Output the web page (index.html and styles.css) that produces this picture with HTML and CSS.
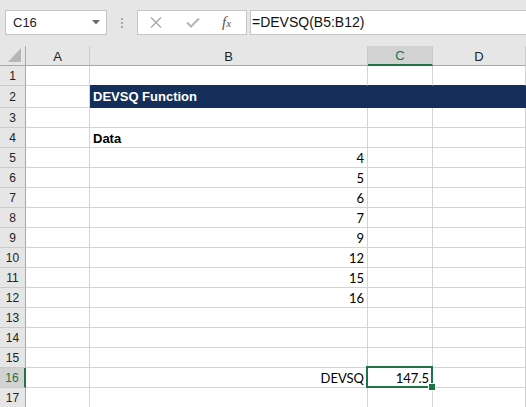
FILE: index.html
```html
<!DOCTYPE html>
<html lang="en">
<head>
    <meta charset="UTF-8">
    <meta name="viewport" content="width=device-width, initial-scale=1.0">
    <title>DEVSQ Function</title>
    <link rel="stylesheet" href="styles.css">
</head>
<body>
    <!-- Formula bar -->
    <div class="ribbon">
        <div class="name-box">
            <span>C16</span>
            <svg width="8" height="5" viewBox="0 0 8 5"><polygon points="0,0 8,0 4,4.5" fill="#6a6a6a"/></svg>
        </div>
        <div class="grip"><i></i><i></i><i></i></div>
        <div class="fx-buttons">
            <svg class="btn-x" width="12" height="11" viewBox="0 0 12 11"><path d="M1 0.5 L11 10.5 M11 0.5 L1 10.5" stroke="#a8a8a8" stroke-width="1.3" fill="none"/></svg>
            <svg class="btn-ok" width="14" height="11" viewBox="0 0 14 11"><path d="M1 5.5 L5 9.5 L13 1.5" stroke="#b5b5b5" stroke-width="2" fill="none"/></svg>
            <span class="fx">f<span>x</span></span>
        </div>
        <div class="formula">=DEVSQ(B5:B12)</div>
    </div>

    <!-- Sheet -->
    <div class="sheet">
        <div class="hd corner"><svg width="13" height="14" viewBox="0 0 13 14"><polygon points="13,0 13,14 0,14" fill="#b6b6b6"/></svg></div>
        <div class="hd">A</div>
        <div class="hd">B</div>
        <div class="hd sel">C</div>
        <div class="hd">D</div>

        <div class="rh">1</div><div class="c"></div><div class="c top-title"></div><div class="c top-title"></div><div class="c top-title"></div>
        <div class="rh">2</div><div class="c"></div><div class="c title">DEVSQ Function</div><div class="c title"></div><div class="c title"></div>
        <div class="rh">3</div><div class="c"></div><div class="c"></div><div class="c"></div><div class="c"></div>
        <div class="rh">4</div><div class="c"></div><div class="c bold">Data</div><div class="c"></div><div class="c"></div>
        <div class="rh">5</div><div class="c"></div><div class="c num">4</div><div class="c"></div><div class="c"></div>
        <div class="rh">6</div><div class="c"></div><div class="c num">5</div><div class="c"></div><div class="c"></div>
        <div class="rh">7</div><div class="c"></div><div class="c num">6</div><div class="c"></div><div class="c"></div>
        <div class="rh">8</div><div class="c"></div><div class="c num">7</div><div class="c"></div><div class="c"></div>
        <div class="rh">9</div><div class="c"></div><div class="c num">9</div><div class="c"></div><div class="c"></div>
        <div class="rh">10</div><div class="c"></div><div class="c num">12</div><div class="c"></div><div class="c"></div>
        <div class="rh">11</div><div class="c"></div><div class="c num">15</div><div class="c"></div><div class="c"></div>
        <div class="rh">12</div><div class="c"></div><div class="c num">16</div><div class="c"></div><div class="c"></div>
        <div class="rh">13</div><div class="c"></div><div class="c"></div><div class="c"></div><div class="c"></div>
        <div class="rh">14</div><div class="c"></div><div class="c"></div><div class="c"></div><div class="c"></div>
        <div class="rh">15</div><div class="c"></div><div class="c"></div><div class="c"></div><div class="c"></div>
        <div class="rh sel">16</div><div class="c"></div><div class="c num">DEVSQ</div><div class="c num active">147.5</div><div class="c"></div>
        <div class="rh">17</div><div class="c"></div><div class="c"></div><div class="c"></div><div class="c"></div>
    </div>
</body>
</html>
```

FILE: styles.css
```css
* {
    box-sizing: border-box;
}

body {
    margin: 0;
    background-color: #e6e6e6;
    font-family: 'Liberation Sans', Arial, sans-serif;
    color: #222;
    overflow: hidden;
}

/* Formula bar */
.ribbon {
    height: 46px;
    padding-top: 10px;
    display: flex;
    align-items: flex-start;
}

.name-box {
    margin-left: 5px;
    width: 102px;
    height: 25px;
    background-color: #fff;
    border: 1px solid #c6c6c6;
    display: flex;
    align-items: center;
    justify-content: space-between;
    padding: 0 6px 0 7px;
    font-size: 13px;
}

.grip {
    width: 30px;
    height: 25px;
    display: flex;
    flex-direction: column;
    align-items: center;
    gap: 2px;
    padding-top: 8px;
}

.grip i {
    width: 2px;
    height: 2px;
    background-color: #a8a8a8;
}

.fx-buttons {
    width: 110px;
    height: 25px;
    background-color: #fff;
    border: 1px solid #c6c6c6;
    display: flex;
    align-items: center;
    padding-left: 12px;
}

.btn-ok {
    margin-left: 24px;
}

.fx {
    margin-left: 22px;
    font-family: 'Liberation Serif', serif;
    font-style: italic;
    font-size: 15px;
    color: #555;
}

.fx span {
    font-size: 11px;
}

.formula {
    flex: 1;
    margin-left: 3px;
    height: 25px;
    background-color: #fff;
    border: 1px solid #c6c6c6;
    border-right: none;
    padding-left: 1px;
    font-size: 14px;
    line-height: 23px;
    color: #111;
}

/* Sheet grid */
.sheet {
    display: grid;
    grid-template-columns: 26px 64px 278px 65px 1fr;
    grid-template-rows: 20px 20px 22px repeat(15, 20px);
}

.hd {
    background-color: #e6e6e6;
    border-right: 1px solid #cacaca;
    border-bottom: 1px solid #a9a9a9;
    display: flex;
    align-items: center;
    justify-content: center;
    font-size: 13px;
    padding-top: 1px;
}

.corner {
    align-items: flex-end;
    justify-content: flex-end;
    padding: 0 4px 3px 0;
    border-right-color: #a9a9a9;
}

.rh {
    background-color: #e6e6e6;
    border-right: 1px solid #a9a9a9;
    border-bottom: 1px solid #cacaca;
    display: flex;
    align-items: center;
    justify-content: center;
    font-size: 12px;
    padding-top: 1px;
}

.hd.sel {
    background-color: #d2d2d2;
    color: #217346;
    border-bottom: 2px solid #217346;
}

.rh.sel {
    background-color: #d2d2d2;
    color: #217346;
    border-right: 2px solid #217346;
}

.c {
    background-color: #fff;
    border-right: 1px solid #d4d4d4;
    border-bottom: 1px solid #d4d4d4;
    display: flex;
    align-items: flex-end;
    padding: 0 3px 1px;
    font-family: Lato, 'Liberation Sans', sans-serif;
    font-size: 13px;
    color: #000;
    white-space: nowrap;
}

.num {
    justify-content: flex-end;
}

.bold {
    font-family: 'Liberation Sans', Arial, sans-serif;
    font-weight: bold;
}

.top-title {
    border-bottom-color: #14305a;
}

.title {
    background-color: #14305a;
    border-color: #14305a;
    color: #fff;
    align-items: center;
    font-family: 'Liberation Sans', Arial, sans-serif;
    font-weight: bold;
    padding-top: 1px;
}

/* Active cell */
.active {
    position: relative;
    z-index: 2;
}

.active::after {
    content: "";
    position: absolute;
    top: -2px;
    left: -2px;
    right: -1px;
    bottom: -1px;
    border: 2px solid #217346;
}

.active::before {
    content: "";
    position: absolute;
    right: -4px;
    bottom: -4px;
    width: 6px;
    height: 6px;
    background-color: #217346;
    border: 1px solid #fff;
    z-index: 3;
}
```
